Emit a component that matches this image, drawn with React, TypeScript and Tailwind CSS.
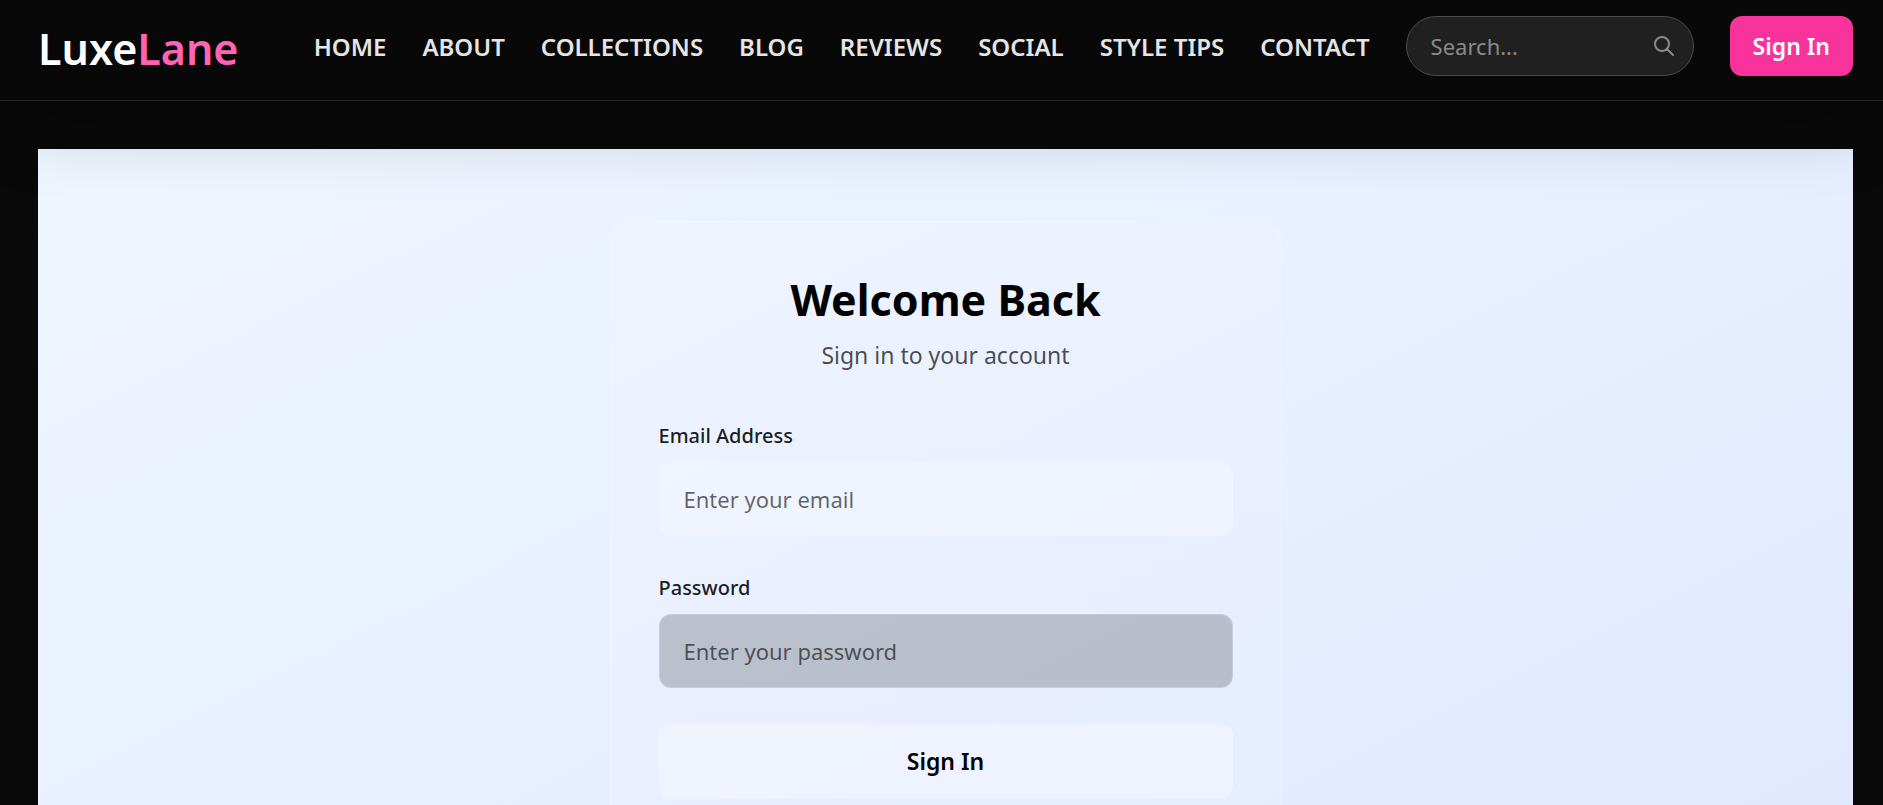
import React from "react";

const navItems = ["HOME", "ABOUT", "COLLECTIONS", "BLOG", "REVIEWS", "SOCIAL", "STYLE TIPS", "CONTACT"];

function Header() {
  return (
    <header className="relative z-10 flex min-h-[101px] items-start justify-between border-b border-[#222222] bg-[#080808] pt-4 pr-[30px] pb-[18px] pl-[38px] shadow-[0_37px_75px_-18px_rgba(0,0,0,0.27)]">
      <a href="#home" className="text-[43px] leading-[66px] font-semibold text-white">
        Luxe<span className="text-[#ff63b4]">Lane</span>
      </a>
      <div className="flex items-center gap-9">
        <nav className="flex items-center gap-9 pt-0.5" aria-label="Main">
          {navItems.map((item) => (
            <a
              key={item}
              href={`#${item.toLowerCase().replace(" ", "-")}`}
              className="text-2xl leading-9 font-semibold whitespace-nowrap text-[#e5e5e5]"
            >
              {item}
            </a>
          ))}
        </nav>
        <form className="relative" role="search" onSubmit={(e) => e.preventDefault()}>
          <input
            type="text"
            aria-label="Search"
            placeholder="Search..."
            className="h-[60px] w-72 rounded-full border border-[#4a4a4a] bg-[#202020] pr-14 pl-6 text-[22px] text-white outline-none placeholder:text-[#8a8a8a]"
          />
          <button
            type="submit"
            aria-label="Submit search"
            className="absolute top-1/2 right-[18px] -translate-y-1/2 text-[#8a8a8a]"
          >
            <svg className="size-6" viewBox="0 0 24 24" fill="none" stroke="currentColor" strokeWidth="2" strokeLinecap="round" strokeLinejoin="round">
              <path d="M21 21l-6-6m2-5a7 7 0 11-14 0 7 7 0 0114 0z" />
            </svg>
          </button>
        </form>
        <button
          type="button"
          className="h-[60px] rounded-xl bg-[#f8339b] px-[23px] text-[23px] font-semibold whitespace-nowrap text-white"
        >
          Sign In
        </button>
      </div>
    </header>
  );
}

function LoginCard() {
  return (
    <section className="w-[672px] rounded-3xl border border-white/25 bg-white/10 p-12">
      <h1 className="text-center text-[43px] leading-[60px] font-bold text-black">Welcome Back</h1>
      <p className="mt-2 text-center text-[23px] leading-[34px] text-black/70">Sign in to your account</p>
      <form className="mt-12 flex flex-col gap-9" onSubmit={(e) => e.preventDefault()}>
        <div className="flex flex-col gap-2.5">
          <label htmlFor="email" className="text-xl leading-8 font-medium text-black/90">
            Email Address
          </label>
          <input
            id="email"
            type="email"
            placeholder="Enter your email"
            className="h-[74px] rounded-xl border border-white/20 bg-white/25 px-6 text-[22px] text-black outline-none placeholder:text-black/60"
          />
        </div>
        <div className="flex flex-col gap-2.5">
          <label htmlFor="password" className="text-xl leading-8 font-medium text-black/90">
            Password
          </label>
          <input
            id="password"
            type="password"
            placeholder="Enter your password"
            className="h-[74px] rounded-xl border border-white/20 bg-black/20 px-6 text-[22px] text-black outline-none placeholder:text-black/60"
          />
        </div>
        <button
          type="submit"
          className="h-[74px] rounded-xl border border-white/20 bg-white/30 text-[23px] font-semibold text-black"
        >
          Sign In
        </button>
      </form>
    </section>
  );
}

export default function App() {
  return (
    <div className="min-h-screen bg-[#090909] font-['Noto_Sans',sans-serif]">
      <Header />
      <main className="pt-12 pr-[30px] pl-[38px]">
        <div className="flex min-h-[905px] items-start justify-center bg-linear-to-br from-blue-50 to-indigo-100 py-[72px]">
          <LoginCard />
        </div>
      </main>
    </div>
  );
}
